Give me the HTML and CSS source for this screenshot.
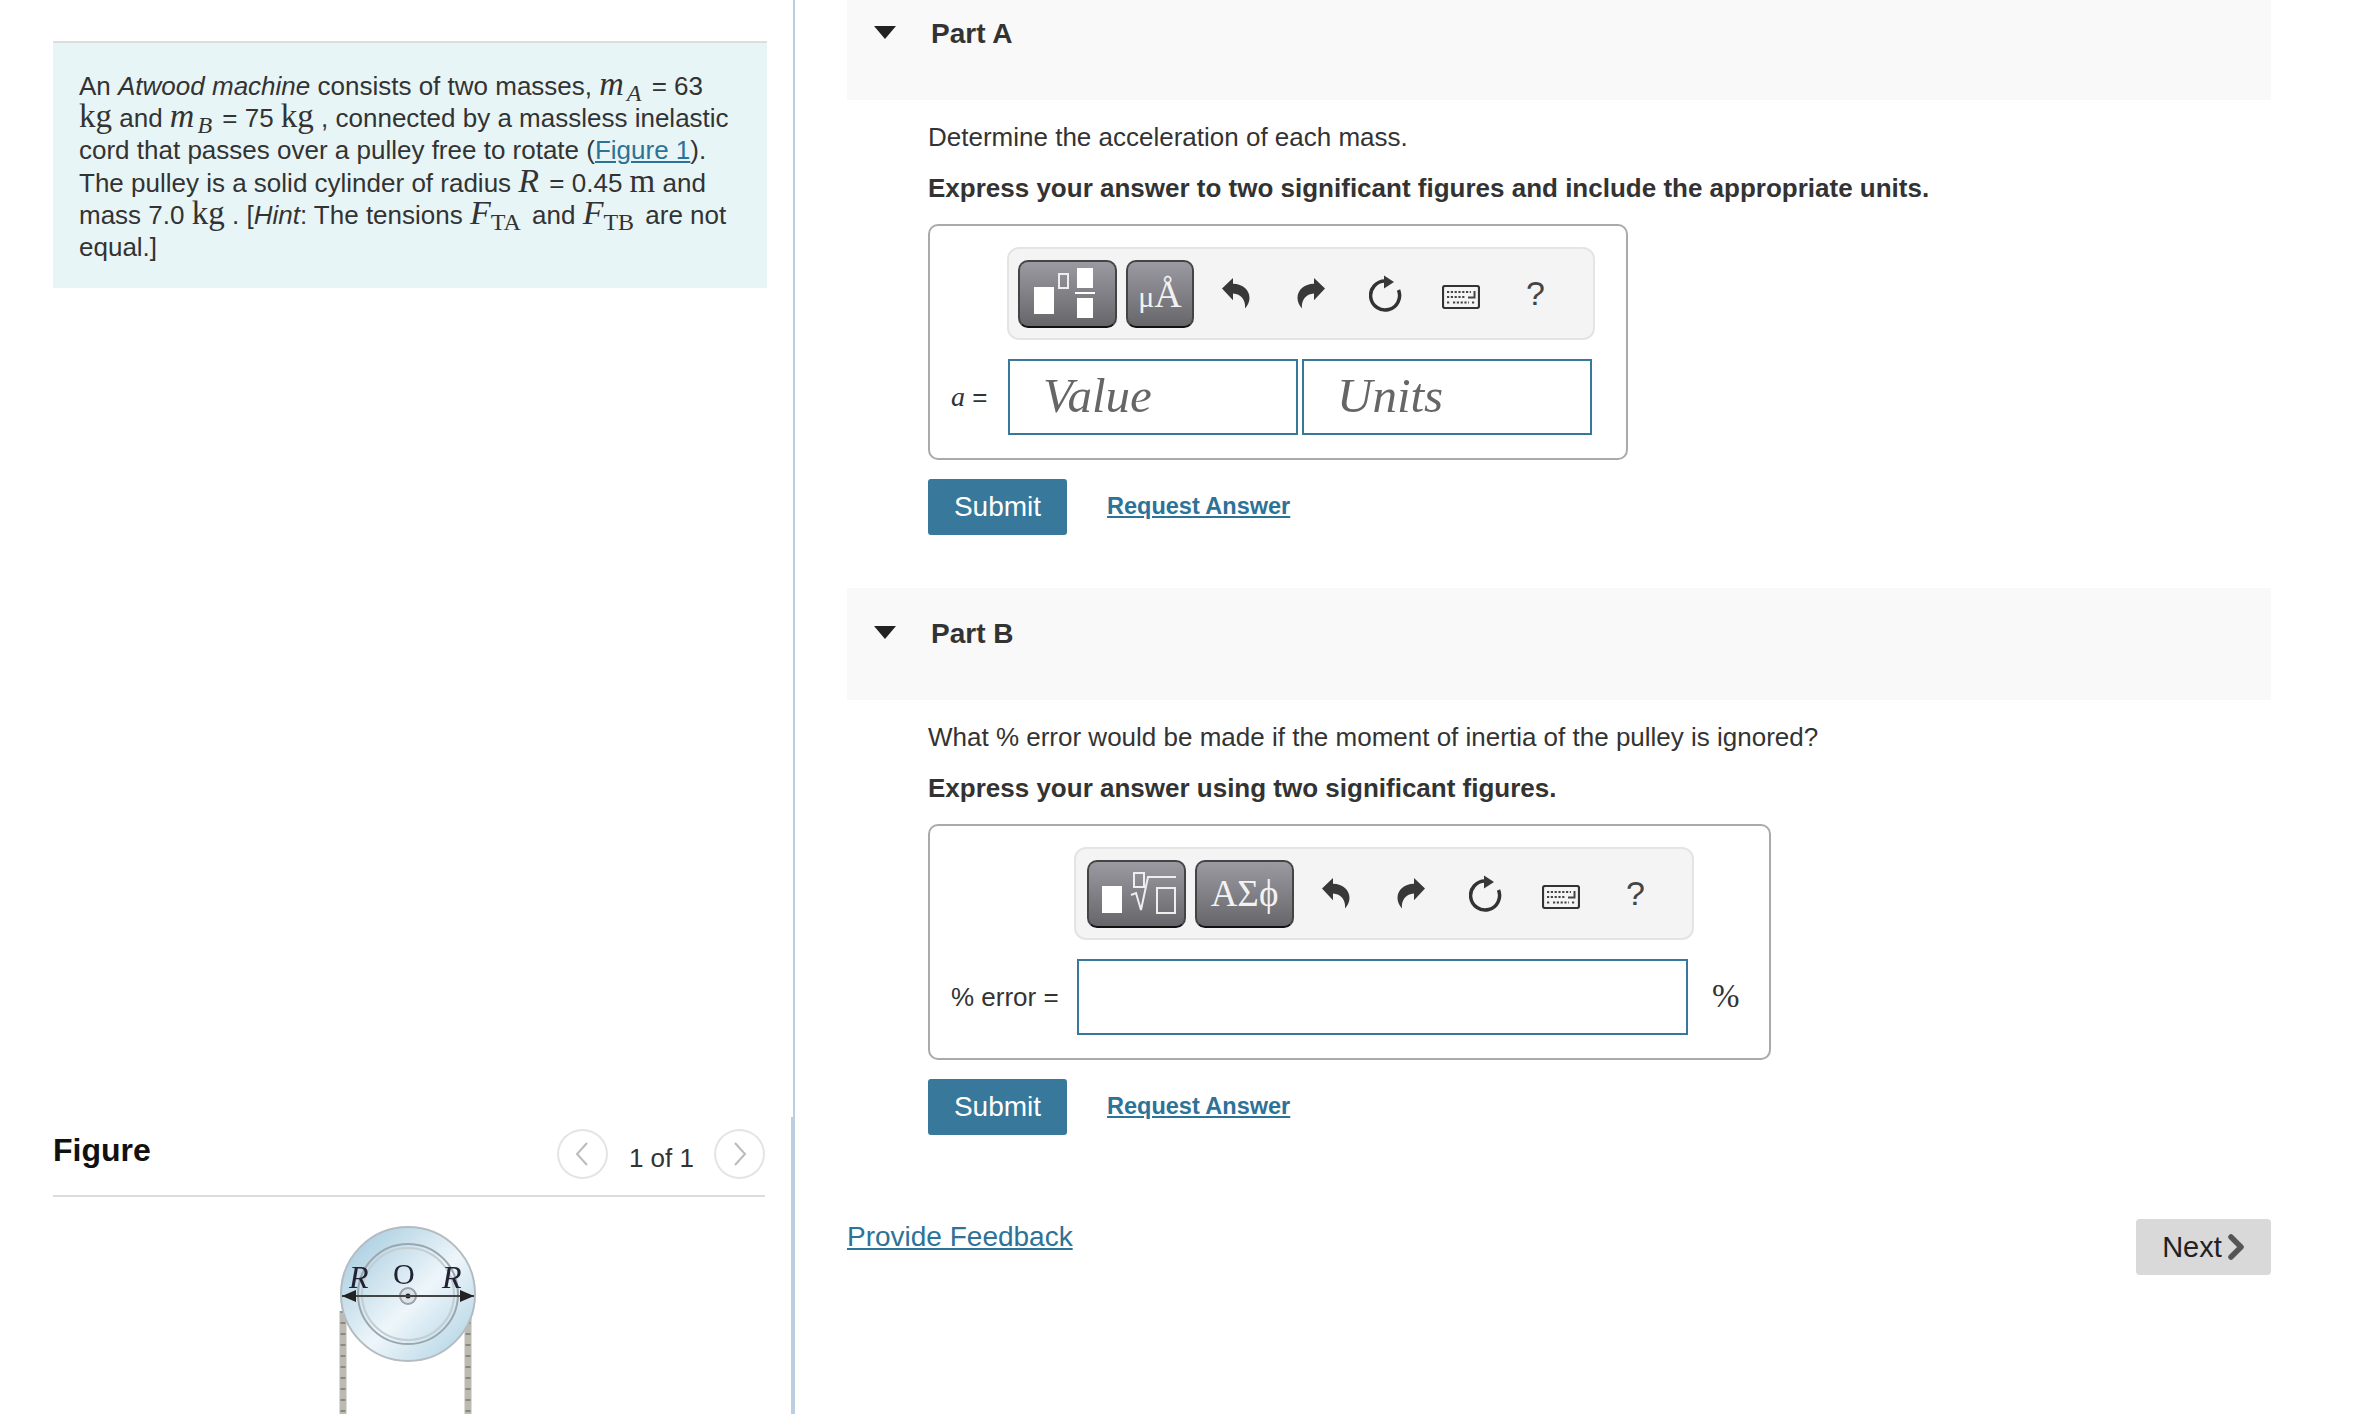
FILE: index.html
```html
<!DOCTYPE html>
<html lang="en">
<head>
    <meta charset="UTF-8">
    <title>Atwood machine</title>
    <link rel="stylesheet" href="styles.css">
</head>
<body>
    <div class="page">
        <aside class="side">
            <div class="problem">
                An <em>Atwood machine</em> consists of two masses, <span class="mi">m</span><sub class="si">A</sub> = 63<br>
                <span class="mr">kg</span> and <span class="mi">m</span><sub class="si">B</sub> = 75 <span class="mr">kg</span> , connected by a massless inelastic<br>
                cord that passes over a pulley free to rotate (<a href="#">Figure 1</a>).<br>
                The pulley is a solid cylinder of radius <span class="mi">R</span> = 0.45 <span class="mr">m</span> and<br>
                mass 7.0 <span class="mr">kg</span> . [<em>Hint</em>: The tensions <span class="mi tight">F</span><sub class="sr">TA</sub> and <span class="mi tight">F</span><sub class="sr">TB</sub> are not<br>
                equal.]
            </div>

            <div class="figure-head">
                <h2>Figure</h2>
                <div class="pager">
                    <span class="round">
                        <svg width="14" height="24" viewBox="0 0 14 24"><path d="M12 1 2 12l10 11" fill="none" stroke="#bbb" stroke-width="2"/></svg>
                    </span>
                    <span class="count">1 of 1</span>
                    <span class="round">
                        <svg width="14" height="24" viewBox="0 0 14 24"><path d="M2 1l10 11L2 23" fill="none" stroke="#bbb" stroke-width="2"/></svg>
                    </span>
                </div>
            </div>

            <div class="figure">
                <svg width="170" height="210" viewBox="0 0 170 210">
                    <defs>
                        <linearGradient id="disc" x1="0" y1="0" x2="1" y2="1">
                            <stop offset="0" stop-color="#9cc6dc"/>
                            <stop offset="0.55" stop-color="#eef6fa"/>
                            <stop offset="1" stop-color="#a9cfe2"/>
                        </linearGradient>
                    </defs>
                    <path d="M21 90V210M146 90V210" stroke="#bdbab2" stroke-width="7"/>
                    <path d="M21 90V210M146 90V210" stroke="#8b8880" stroke-width="5" stroke-dasharray="2 9"/>
                    <circle cx="86" cy="73" r="67" fill="url(#disc)" stroke="#b4bcc2" stroke-width="2"/>
                    <circle cx="86" cy="73" r="50" fill="none" stroke="#9aa7af" stroke-width="2"/>
                    <circle cx="86" cy="73" r="46" fill="none" stroke="#c4cdd2" stroke-width="2"/>
                    <circle cx="86" cy="75" r="8" fill="#d8e2e8" stroke="#9aa0a4" stroke-width="2"/>
                    <circle cx="86" cy="75" r="2.5" fill="#222"/>
                    <path d="M20 75H152" stroke="#444" stroke-width="2"/>
                    <path d="M20 75l14-6v12zM152 75l-14-6v12z" fill="#222"/>
                    <text class="fig-r" x="27" y="67">R</text>
                    <text class="fig-o" x="71" y="63">O</text>
                    <text class="fig-r" x="120" y="67">R</text>
                </svg>
            </div>
        </aside>

        <main class="main">
            <section class="part">
                <div class="part-head part-a">
                    <span class="caret"></span>
                    <h3>Part A</h3>
                </div>
                <div class="part-body">
                    <p class="ask">Determine the acceleration of each mass.</p>
                    <p class="how">Express your answer to two significant figures and include the appropriate units.</p>

                    <div class="answer answer-a">
                        <div class="toolbar">
                            <span class="tool-btn wide">
                                <svg width="95" height="64" viewBox="0 0 95 64">
                                    <rect x="14" y="25" width="20" height="27" fill="#fff"/>
                                    <rect x="39" y="12" width="9" height="14" fill="none" stroke="#eee" stroke-width="2"/>
                                    <rect x="57" y="6" width="16" height="20" fill="#fff"/>
                                    <rect x="55" y="30" width="20" height="2" fill="#fff"/>
                                    <rect x="57" y="36" width="16" height="20" fill="#fff"/>
                                </svg>
                            </span>
                            <span class="tool-btn unit"><span class="mu">μ</span>Å</span>
                            <span class="tool"><svg width="28" height="31" viewBox="0 0 28 31"><path class="dark" d="M0 10.600 11 0v5.800c10 .2 16.500 6.200 16.500 14.200 0 4-2 7.500-4.500 10.500 1-8.500-4-14.500-12-15v6.800z"/></svg></span>
                            <span class="tool"><svg width="28" height="31" viewBox="0 0 28 31"><path class="dark" d="M28 10.600 17 0v5.800C7 6 .5 12 .5 20c0 4 2 7.500 4.500 10.500-1-8.500 4-14.500 12-15v6.800z"/></svg></span>
                            <span class="tool"><svg width="34" height="38" viewBox="0 0 34 38"><path d="M16 6A14.500 14.500 0 1 0 29.500 15" fill="none" stroke="#333" stroke-width="3.500"/><path class="dark" d="M15 .5 25 7 15 13.500z"/></svg></span>
                            <span class="tool kb"><svg width="38" height="24" viewBox="0 0 38 24"><rect x="1" y="1" width="36" height="22" rx="2" fill="none" stroke="#333" stroke-width="2.200"/><path d="M5 7h24M5 12h18M5 17.500h3M11 17.500h16M30 17.500h3" stroke="#444" stroke-width="2.200" stroke-dasharray="2.200 1.600"/><path d="M32.500 6v6.500H26" fill="none" stroke="#444" stroke-width="2"/></svg></span>
                            <span class="tool help">?</span>
                        </div>
                        <div class="row">
                            <span class="label label-a"><i>a</i> =</span>
                            <div class="field hint">Value</div>
                            <div class="field hint second">Units</div>
                        </div>
                    </div>

                    <div class="actions">
                        <button class="submit">Submit</button>
                        <a class="request" href="#">Request Answer</a>
                    </div>
                </div>
            </section>

            <section class="part">
                <div class="part-head part-b">
                    <span class="caret"></span>
                    <h3>Part B</h3>
                </div>
                <div class="part-body">
                    <p class="ask">What % error would be made if the moment of inertia of the pulley is ignored?</p>
                    <p class="how">Express your answer using two significant figures.</p>

                    <div class="answer answer-b">
                        <div class="toolbar">
                            <span class="tool-btn wide">
                                <svg width="95" height="64" viewBox="0 0 95 64">
                                    <rect x="13" y="24" width="20" height="27" fill="#fff"/>
                                    <rect x="45" y="11" width="10" height="14" fill="none" stroke="#eee" stroke-width="2"/>
                                    <path d="M42 33l5-2 5 17 7-33h28" fill="none" stroke="#eee" stroke-width="2"/>
                                    <rect x="68" y="26" width="18" height="25" fill="none" stroke="#eee" stroke-width="2"/>
                                </svg>
                            </span>
                            <span class="tool-btn greek">ΑΣϕ</span>
                            <span class="tool"><svg width="28" height="31" viewBox="0 0 28 31"><path class="dark" d="M0 10.600 11 0v5.800c10 .2 16.500 6.200 16.500 14.200 0 4-2 7.500-4.500 10.500 1-8.500-4-14.500-12-15v6.800z"/></svg></span>
                            <span class="tool"><svg width="28" height="31" viewBox="0 0 28 31"><path class="dark" d="M28 10.600 17 0v5.800C7 6 .5 12 .5 20c0 4 2 7.500 4.500 10.500-1-8.500 4-14.500 12-15v6.800z"/></svg></span>
                            <span class="tool"><svg width="34" height="38" viewBox="0 0 34 38"><path d="M16 6A14.500 14.500 0 1 0 29.500 15" fill="none" stroke="#333" stroke-width="3.500"/><path class="dark" d="M15 .5 25 7 15 13.500z"/></svg></span>
                            <span class="tool kb"><svg width="38" height="24" viewBox="0 0 38 24"><rect x="1" y="1" width="36" height="22" rx="2" fill="none" stroke="#333" stroke-width="2.200"/><path d="M5 7h24M5 12h18M5 17.500h3M11 17.500h16M30 17.500h3" stroke="#444" stroke-width="2.200" stroke-dasharray="2.200 1.600"/><path d="M32.500 6v6.500H26" fill="none" stroke="#444" stroke-width="2"/></svg></span>
                            <span class="tool help">?</span>
                        </div>
                        <div class="row">
                            <span class="label label-b">% error =</span>
                            <div class="field long"></div>
                            <span class="unit-sign">%</span>
                        </div>
                    </div>

                    <div class="actions">
                        <button class="submit">Submit</button>
                        <a class="request" href="#">Request Answer</a>
                    </div>
                </div>
            </section>

            <div class="foot">
                <a class="feedback" href="#">Provide Feedback</a>
                <button class="next">Next
                    <svg width="18" height="26" viewBox="0 0 18 26"><path d="M4 3l10 10L4 23" fill="none" stroke="#555" stroke-width="5.500" stroke-linecap="round" stroke-linejoin="round"/></svg>
                </button>
            </div>
        </main>
    </div>
</body>
</html>
```

FILE: styles.css
```css
html, body {
    margin: 0;
    height: 100%;
    overflow: hidden;
    background-color: #fff;
    color: #333;
    font-family: "Liberation Sans", Arial, sans-serif;
    font-size: 26px;
}

a {
    color: #2d7297;
}

.page {
    display: flex;
    height: 1414px;
}

/* left column */
.side {
    position: relative;
    box-sizing: border-box;
    width: 795px;
    height: 1414px;
    padding: 41px 26px 0 53px;
    border-right: 2px solid #bccfe2;
    overflow: hidden;
}

/* thicker part of the divider, next to the figure */
.side::after {
    content: "";
    position: absolute;
    top: 1117px;
    right: 0;
    width: 2px;
    height: 297px;
    background-color: #bccfe2;
}

.problem {
    height: 247px;
    box-sizing: border-box;
    padding: 27px 0 0 26px;
    border-top: 2px solid #ddd;
    background-color: #e8f5f6;
    line-height: 32.200px;
    white-space: nowrap;
}

.mi, .mr, .si, .sr {
    font-family: "Liberation Serif", serif;
    line-height: 0;
}

.mi {
    font-style: italic;
    font-size: 34px;
    letter-spacing: 3px;
}

.tight {
    letter-spacing: 0;
}

.mr {
    font-size: 33px;
}

.si {
    font-style: italic;
    font-size: 24px;
    margin-right: 3px;
}

.sr {
    font-size: 24px;
    margin-right: 4px;
}

.figure-head {
    display: flex;
    justify-content: space-between;
    align-items: center;
    height: 66px;
    margin: 833px 2px 0 0;
    padding-bottom: 8px;
    border-bottom: 2px solid #ddd;
}

.figure-head h2 {
    margin: 0 0 7px;
    font-size: 32px;
    color: #111;
}

.pager {
    display: flex;
    align-items: center;
}

.round {
    display: flex;
    align-items: center;
    justify-content: center;
    box-sizing: border-box;
    width: 51px;
    height: 50px;
    border: 2px solid #e4e4e4;
    border-radius: 50%;
}

.count {
    margin: 8px 20px 0 21px;
}

.figure {
    margin: 24px 0 0 269px;
    filter: blur(0.5px);
}

.fig-r {
    font: italic 32px "Liberation Serif", serif;
    fill: #223;
}

.fig-o {
    font: 30px "Liberation Serif", serif;
    fill: #223;
}

/* right column */
.main {
    width: 1424px;
    margin-left: 52px;
}

.part-head {
    display: flex;
    box-sizing: border-box;
    padding-left: 27px;
    background-color: #f9f9f9;
}

.part-a {
    height: 100px;
    padding-top: 18px;
}

.part-b {
    height: 112px;
    padding-top: 30px;
}

.part-head h3 {
    margin: 0 0 0 35px;
    font-size: 28px;
    line-height: 32px;
    color: #333;
}

.caret {
    width: 0;
    height: 0;
    margin-top: 8px;
    border-left: 11px solid transparent;
    border-right: 11px solid transparent;
    border-top: 13px solid #222;
}

.part-body {
    padding-left: 81px;
}

.ask {
    margin: 21px 0 0;
    line-height: 32px;
}

.how {
    margin: 19px 0 0;
    line-height: 32px;
    font-weight: bold;
}

.answer {
    box-sizing: border-box;
    height: 236px;
    margin-top: 20px;
    padding-top: 21px;
    border: 2px solid #aaa;
    border-radius: 10px;
}

.answer-a {
    width: 700px;
}

.answer-b {
    width: 843px;
}

.toolbar {
    display: flex;
    align-items: center;
    box-sizing: border-box;
    width: fit-content;
    height: 93px;
    padding: 0 20px 0 9px;
    background-color: #f4f4f4;
    border: 2px solid #e4e4e4;
    border-radius: 12px;
}

.answer-a .toolbar {
    margin-left: 77px;
}

.answer-b .toolbar {
    margin-left: 144px;
    padding: 0 19px 0 11px;
}

.tool-btn {
    display: flex;
    align-items: center;
    justify-content: center;
    box-sizing: border-box;
    height: 68px;
    margin-right: 9px;
    border: 2px solid #444;
    border-bottom-color: #111;
    border-radius: 10px;
    background: linear-gradient(#9b9aa2, #66666a);
    color: #f2f2f2;
    font-family: "Liberation Serif", serif;
}

.wide {
    width: 99px;
}

.unit {
    align-items: baseline;
    width: 68px;
    padding-top: 10px;
    font-size: 38px;
}

.mu {
    font-size: 30px;
}

.greek {
    width: 99px;
    font-size: 37px;
}

.tool {
    display: flex;
    align-items: center;
    justify-content: center;
    width: 75px;
    height: 60px;
}

.tool-btn + .tool {
    margin-left: -5px;
}

.dark {
    fill: #383838;
}

.kb {
    padding-top: 7px;
    box-sizing: border-box;
}

.help {
    font-size: 34px;
    color: #444;
}

.row {
    display: flex;
    align-items: center;
    margin-top: 19px;
    padding-left: 21px;
}

.label {
    font-size: 26px;
    color: #333;
}

.label-a {
    width: 57px;
}

.label-a i {
    font-family: "Liberation Serif", serif;
    font-size: 28px;
}

.label-b {
    width: 126px;
}

.field {
    box-sizing: border-box;
    height: 76px;
    border: 2px solid #37789b;
}

.hint {
    width: 290px;
    padding-left: 33px;
    font: italic 49px/70px "Liberation Serif", serif;
    color: #666;
}

.second {
    margin-left: 4px;
}

.long {
    width: 611px;
}

.unit-sign {
    margin: -2px 0 0 24px;
    font-family: "Liberation Serif", serif;
    font-size: 33px;
}

.actions {
    display: flex;
    align-items: center;
    margin-top: 19px;
}

.submit {
    width: 139px;
    height: 56px;
    padding: 0;
    border: none;
    border-radius: 3px;
    background-color: #37789b;
    color: #fff;
    font-family: inherit;
    font-size: 28px;
}

.request {
    margin: 0 0 2px 40px;
    font-size: 23.500px;
    font-weight: bold;
}

.part + .part {
    margin-top: 53px;
}

.foot {
    display: flex;
    justify-content: space-between;
    margin-top: 84px;
}

.feedback {
    font-size: 28px;
    line-height: 36px;
}

.next {
    display: flex;
    align-items: center;
    justify-content: center;
    gap: 5px;
    width: 135px;
    height: 56px;
    padding: 0;
    border: none;
    border-radius: 4px;
    background-color: #d9d9d9;
    color: #222;
    font-family: inherit;
    font-size: 29px;
}
```
